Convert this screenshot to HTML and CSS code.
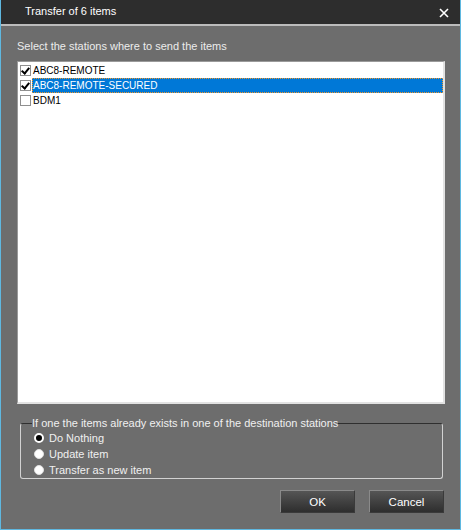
FILE: index.html
```html
<!DOCTYPE html>
<html lang="en">
<head>
    <meta charset="UTF-8">
    <title>Transfer of 6 items</title>
    <link rel="stylesheet" href="styles.css">
</head>
<body>
    <div class="window">
        <div class="title-bar">
            <span class="title">Transfer of 6 items</span>
            <span class="close">
                <svg width="10" height="10" viewBox="0 0 10 10">
                    <path d="M1 1 L9 9 M9 1 L1 9" stroke="#ffffff" stroke-width="1.6"/>
                </svg>
            </span>
        </div>
        <div class="body">
            <div class="caption">Select the stations where to send the items</div>
            <div class="listbox">
                <div class="row">
                    <span class="check checked"></span>
                    <span class="name">ABC8-REMOTE</span>
                </div>
                <div class="row selected">
                    <span class="check checked"></span>
                    <span class="name">ABC8-REMOTE-SECURED</span>
                </div>
                <div class="row">
                    <span class="check"></span>
                    <span class="name">BDM1</span>
                </div>
            </div>
            <fieldset class="options">
                <legend>If one the items already exists in one of the destination stations</legend>
                <label class="radio"><span class="dot on"></span>Do Nothing</label>
                <label class="radio"><span class="dot"></span>Update item</label>
                <label class="radio"><span class="dot"></span>Transfer as new item</label>
            </fieldset>
            <div class="buttons">
                <button>OK</button>
                <button>Cancel</button>
            </div>
        </div>
    </div>
</body>
</html>
```

FILE: styles.css
```css
body {
    margin: 0;
    font-family: 'Liberation Sans', Arial, sans-serif;
    font-size: 11px;
    background-color: #6d6d6d;
}

.window {
    width: 461px;
    height: 530px;
    box-sizing: border-box;
    border: 1px solid #5fb8e0;
    border-top: none;
    background-color: #6d6d6d;
    display: flex;
    flex-direction: column;
}

.title-bar {
    height: 24px;
    background-color: #2d2d2d;
    border-bottom: 2px solid #bcbcbc;
    display: flex;
    align-items: center;
    justify-content: space-between;
    color: #ffffff;
    padding: 0 11px 0 24px;
}

.title {
    font-size: 11px;
    margin-top: -3px;
}

.close {
    display: flex;
    margin-top: 2px;
}

.body {
    flex: 1;
    padding: 0 15px 0 16px;
    display: flex;
    flex-direction: column;
}

.caption {
    color: #ececec;
    margin-top: 14px;
    height: 21px;
}

.listbox {
    height: 339px;
    background-color: #ffffff;
    border-top: 1px solid #9a9a9a;
    border-left: 1px solid #9a9a9a;
    border-right: 2px solid #e2e2e2;
    border-bottom: 2px solid #e2e2e2;
    padding-top: 1px;
}

.row {
    height: 15px;
    display: flex;
    align-items: center;
    font-size: 10px;
    color: #000000;
}

.check {
    width: 11px;
    height: 11px;
    box-sizing: border-box;
    border: 1px solid #8f8f8f;
    background-color: #ffffff;
    margin: 0 1px 0 2px;
    position: relative;
}

.check.checked::after {
    content: '';
    position: absolute;
    left: 2px;
    top: 0;
    width: 3px;
    height: 6px;
    border: solid #000000;
    border-width: 0 2px 2px 0;
    transform: rotate(40deg);
}

.name {
    flex: 1;
    height: 15px;
    line-height: 15px;
    box-sizing: border-box;
    padding-left: 1px;
}

.selected .name {
    background-color: #0078d7;
    color: #ffffff;
    outline: 1px dotted #f0962a;
    outline-offset: -1px;
}

.options {
    margin: 13px 2px 0 3px;
    padding: 0 0 0 13px;
    border: 1px solid #d2d2d2;
    border-top-color: #2f2f2f;
    border-radius: 3px;
    color: #f0f0f0;
}

.options legend {
    padding: 0;
    margin-left: -2px;
    line-height: 13px;
    color: #f0f0f0;
}

.radio {
    display: flex;
    align-items: center;
    height: 16px;
}

.dot {
    width: 10px;
    height: 10px;
    border-radius: 50%;
    background-color: #ffffff;
    margin-right: 5px;
    box-sizing: border-box;
    border: 1px solid #e0e0e0;
}

.dot.on {
    border: 2.5px solid #ffffff;
    background-color: #000000;
}

.buttons {
    display: flex;
    justify-content: flex-end;
    gap: 14px;
    margin-top: 11px;
    padding-right: 1px;
}

.buttons button {
    width: 75px;
    height: 23px;
    font-family: 'Liberation Sans', Arial, sans-serif;
    font-size: 11.5px;
    color: #ffffff;
    background: linear-gradient(#555555, #2e2e2e);
    border: 1px solid #8a8a8a;
    border-right-color: #3a3a3a;
    border-bottom-color: #3a3a3a;
    padding: 0;
}
```
